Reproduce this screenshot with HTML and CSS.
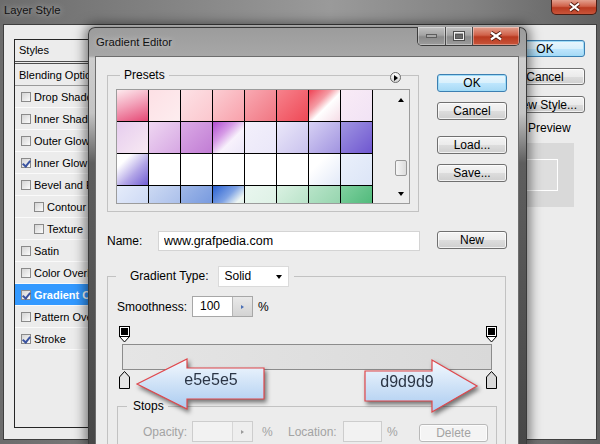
FILE: index.html
```html
<!DOCTYPE html>
<html lang="en">

<head>
    <meta charset="UTF-8">
    <meta name="viewport" content="width=device-width, initial-scale=1.0">
    <title>Layer Style - Gradient Editor</title>
    <link rel="stylesheet" href="styles.css">
</head>

<body>
    <!-- Layer Style dialog (behind) -->
    <div class="window layer-style">
        <div class="ls-titlebar">
            <span class="ls-title">Layer Style</span>
            <span class="ls-close">
                <svg width="13" height="10" viewBox="0 0 13 10">
                    <path d="M2 1.5 L11 8.5 M11 1.5 L2 8.5" stroke="#5a1e12" stroke-width="4" />
                    <path d="M2 1.5 L11 8.5 M11 1.5 L2 8.5" stroke="#fff" stroke-width="2.2" />
                </svg>
            </span>
        </div>
        <div class="ls-client">
            <div class="styles-list">
                <div class="list-head">Styles</div>
                <div class="list-row plain">Blending Options: Default</div>
                <div class="list-row"><span class="check"></span>Drop Shadow</div>
                <div class="list-row"><span class="check"></span>Inner Shadow</div>
                <div class="list-row"><span class="check"></span>Outer Glow</div>
                <div class="list-row"><span class="check on"></span>Inner Glow</div>
                <div class="list-row"><span class="check"></span>Bevel and Emboss</div>
                <div class="list-row sub"><span class="check"></span>Contour</div>
                <div class="list-row sub"><span class="check"></span>Texture</div>
                <div class="list-row"><span class="check"></span>Satin</div>
                <div class="list-row"><span class="check"></span>Color Overlay</div>
                <div class="list-row selected"><span class="check on"></span>Gradient Overlay</div>
                <div class="list-row"><span class="check"></span>Pattern Overlay</div>
                <div class="list-row"><span class="check on"></span>Stroke</div>
            </div>
            <div class="ls-side">
                <button class="btn default">OK</button>
                <button class="btn">Cancel</button>
                <button class="btn">New Style...</button>
                <div class="preview-row"><span class="check on"></span>Preview</div>
                <div class="preview-box"><div class="preview-swatch"></div></div>
            </div>
        </div>
    </div>

    <!-- Gradient Editor dialog (front) -->
    <div class="window gradient-editor">
        <div class="ge-titlebar">
            <span class="ge-title">Gradient Editor</span>
            <div class="caption-btns">
                <span class="cap-btn min">
                    <svg width="11" height="4" viewBox="0 0 11 4"><rect x="0.5" y="0.5" width="10" height="3" fill="#a9a9a9" stroke="#5d5d5d" /></svg>
                </span>
                <span class="cap-btn max">
                    <svg width="12" height="10" viewBox="0 0 12 10">
                        <rect x="0.5" y="0.5" width="11" height="9" fill="none" stroke="#4d4d4d" />
                        <rect x="1.5" y="1.5" width="9" height="7" fill="none" stroke="#efefef" />
                        <rect x="2.5" y="3.5" width="7" height="4" fill="#6a6a6a" stroke="#555" />
                    </svg>
                </span>
                <span class="cap-btn close">
                    <svg width="14" height="10" viewBox="0 0 14 10">
                        <path d="M2 1.5 L12 8.5 M12 1.5 L2 8.5" stroke="#4d1a10" stroke-width="4" />
                        <path d="M2 1.5 L12 8.5 M12 1.5 L2 8.5" stroke="#fff" stroke-width="2.2" />
                    </svg>
                </span>
            </div>
        </div>

        <div class="ge-client">
            <div class="ge-top">
                <div class="ge-left">
                    <fieldset class="group presets">
                        <legend>Presets</legend>
                        <div class="swatch-box">
                            <div class="swatches">
                                <span></span><span></span><span></span><span></span>
                                <span></span><span></span><span></span><span></span>
                                <span></span><span></span><span></span><span></span>
                                <span></span><span></span><span></span><span></span>
                                <span></span><span></span><span></span><span></span>
                                <span></span><span></span><span></span><span></span>
                                <span></span><span></span><span></span><span></span>
                                <span></span><span></span><span></span><span></span>
                            </div>
                            <div class="scrollbar">
                                <span class="sb-arrow up"></span>
                                <span class="sb-thumb"></span>
                                <span class="sb-arrow down"></span>
                            </div>
                        </div>
                    </fieldset>
                    <span class="preset-menu"></span>

                    <div class="name-row">
                        <label for="grad-name">Name:</label>
                        <input id="grad-name" class="text-input" type="text" value="www.grafpedia.com">
                    </div>
                </div>

                <div class="ge-right">
                    <button class="btn default">OK</button>
                    <button class="btn gap-s">Cancel</button>
                    <button class="btn gap-m">Load...</button>
                    <button class="btn gap-s">Save...</button>
                    <button class="btn gap-l">New</button>
                </div>
            </div>

            <fieldset class="group gradient-type">
                <legend>
                    <span>Gradient Type:</span>
                    <span class="select">Solid<span class="select-arrow"></span></span>
                </legend>

                <div class="smooth-row">
                    <span class="smooth-label">Smoothness:</span>
                    <span class="spin">
                        <span class="spin-val">100</span>
                        <span class="spin-btn"><span class="spin-tri"></span></span>
                    </span>
                    <span class="pct">%</span>
                </div>

                <div class="strip">
                    <svg class="stop-top left" width="11" height="17" viewBox="0 0 11 17">
                        <rect x="0.5" y="0.5" width="10" height="10" fill="#fff" stroke="#000" />
                        <rect x="2" y="2" width="7" height="7" fill="#000" />
                        <polygon points="0.5,10.5 10.5,10.5 5.5,16" fill="#fff" stroke="#000" />
                    </svg>
                    <svg class="stop-top right" width="11" height="17" viewBox="0 0 11 17">
                        <rect x="0.5" y="0.5" width="10" height="10" fill="#fff" stroke="#000" />
                        <rect x="2" y="2" width="7" height="7" fill="#000" />
                        <polygon points="0.5,10.5 10.5,10.5 5.5,16" fill="#fff" stroke="#000" />
                    </svg>
                    <div class="gradient-bar"></div>
                    <svg class="stop-bottom left" width="11" height="18" viewBox="0 0 11 18">
                        <polygon points="5.5,0.5 10.5,6 10.5,17.5 0.5,17.5 0.5,6" fill="#e5e5e5" stroke="#000" />
                    </svg>
                    <svg class="stop-bottom right" width="11" height="18" viewBox="0 0 11 18">
                        <polygon points="5.5,0.5 10.5,6 10.5,17.5 0.5,17.5 0.5,6" fill="#d9d9d9" stroke="#000" />
                    </svg>
                </div>

                <fieldset class="group stops">
                    <legend>Stops</legend>
                    <div class="stops-row">
                        <span class="lbl-opacity">Opacity:</span>
                        <span class="spin disabled">
                            <span class="spin-val"></span>
                            <span class="spin-btn"><span class="spin-tri"></span></span>
                        </span>
                        <span class="pct">%</span>
                        <span class="lbl-location">Location:</span>
                        <span class="loc-box"></span>
                        <span class="pct">%</span>
                        <button class="btn delete">Delete</button>
                    </div>
                </fieldset>
            </fieldset>
        </div>
    </div>

    <!-- callout arrows drawn over the dialog -->
    <svg class="callouts" width="600" height="444" viewBox="0 0 600 444">
        <defs>
            <linearGradient id="arrowFill" x1="0" y1="0" x2="0" y2="1">
                <stop offset="0" stop-color="#f4f9fe" />
                <stop offset="1" stop-color="#aacbf0" />
            </linearGradient>
        </defs>
        <polygon class="arrow" points="137,384 187,359 187,368 264,368 264,399 187,399 187,409" />
        <text class="arrow-text" x="211" y="385">e5e5e5</text>
        <polygon class="arrow" points="365,371 432,371 432,360 477,386 432,412 432,401 365,401" />
        <text class="arrow-text" x="407" y="387">d9d9d9</text>
    </svg>
</body>

</html>
```

FILE: styles.css
```css
* {
    box-sizing: border-box;
}

body {
    margin: 0;
    width: 600px;
    height: 444px;
    overflow: hidden;
    position: relative;
    background: #6b6b6b;
    font-family: 'Liberation Sans', Arial, sans-serif;
    font-size: 12px;
    color: #000;
}

.window {
    position: absolute;
}

/* ---------- Layer Style ---------- */

.layer-style {
    left: 0;
    top: 0;
    width: 600px;
    height: 444px;
    background: linear-gradient(to right, #6c6c6c 0%, #858585 30%, #9a9a9a 55%, #838383 78%, #606060 100%);
}

.ls-titlebar {
    height: 24px;
    display: flex;
    justify-content: space-between;
    align-items: flex-start;
    padding: 0 3px 0 4px;
}

.ls-title {
    font-size: 11.3px;
    line-height: 20px;
    color: #111;
    text-shadow: 0 0 6px rgba(255, 255, 255, 0.6);
}

.ls-close {
    width: 46px;
    height: 15px;
    display: flex;
    align-items: center;
    justify-content: center;
    border: 1px solid #4a1d14;
    border-top: none;
    border-radius: 0 0 5px 5px;
    background: linear-gradient(#e3a08e 0%, #d0624a 45%, #b93a20 55%, #c9553a 100%);
}

.ls-client {
    margin-left: 3px;
    width: 594px;
    height: 416px;
    border: 1px solid #3f3f3f;
    background: #ececec;
    display: flex;
    justify-content: space-between;
    padding: 14px 11px 0 10px;
}

.styles-list {
    width: 150px;
    height: 389px;
    border: 1px solid #262626;
    background: #ececec;
}

.list-head {
    height: 24px;
    line-height: 21px;
    padding-left: 4px;
    font-size: 11px;
    border-bottom: 3px double #4d4d4d;
}

.list-row {
    height: 22px;
    display: flex;
    align-items: center;
    padding-left: 6px;
    font-size: 11px;
    white-space: nowrap;
    border-bottom: 1px solid #fafafa;
}

.list-row.plain {
    padding-left: 4px;
    border-bottom-color: #9a9a9a;
}

.list-row.sub {
    padding-left: 19px;
}

.list-row.selected {
    background: #3399ff;
    color: #fff;
    font-weight: bold;
}

.check {
    position: relative;
    flex: none;
    width: 10px;
    height: 10px;
    margin-right: 3px;
    border: 1px solid #8a8a8a;
    background: linear-gradient(135deg, #d4d4d4, #fbfbfb);
}

.check.on::after {
    content: "";
    position: absolute;
    left: 2px;
    top: 0;
    width: 3px;
    height: 6px;
    border: solid #3a53a0;
    border-width: 0 2px 2px 0;
    transform: rotate(40deg);
}

.ls-side {
    width: 80px;
    display: flex;
    flex-direction: column;
    padding-top: 1px;
}

.ls-side .btn {
    height: 17px;
    line-height: 14px;
}

.ls-side .btn + .btn {
    margin-top: 11px;
}

.preview-row {
    display: flex;
    align-items: center;
    height: 14px;
    margin-top: 8px;
    padding-left: 6px;
}

.preview-row .check {
    margin-right: 7px;
}

.preview-box {
    width: 64px;
    height: 64px;
    margin: 8px 0 0 5px;
    background: #d9d9d9;
    display: flex;
    align-items: center;
    justify-content: center;
}

.preview-swatch {
    width: 32px;
    height: 32px;
    border: 1px solid #fff;
    background: #dedede;
}

/* ---------- buttons ---------- */

.btn {
    display: block;
    width: 100%;
    height: 18px;
    padding: 0;
    border: 1px solid #707070;
    border-radius: 3px;
    background: linear-gradient(#f4f4f4 0%, #ebebeb 50%, #dddddd 51%, #cfcfcf 100%);
    box-shadow: inset 0 0 0 1px rgba(255, 255, 255, 0.7);
    font-family: inherit;
    font-size: 12px;
    line-height: 15px;
    color: #000;
}

.btn.default {
    border-color: #3c7fb1;
    background: linear-gradient(#eaf6fd 0%, #d9f0fc 50%, #bee6fd 51%, #a7d9f5 100%);
    box-shadow: inset 0 0 0 1px #9fdcf8;
}

/* ---------- Gradient Editor ---------- */

.gradient-editor {
    left: 88px;
    top: 27px;
    width: 439px;
    height: 417px;
    padding: 0 7px 0 6px;
    border: 1px solid #3a3a3a;
    border-bottom: none;
    border-radius: 7px 7px 0 0;
    background: linear-gradient(#9c9c9c 0, #a7a7a7 28px, #cdcdcd 30px, #c4c4c4 85px, #5e5e5e 135px, #474747 100%);
    box-shadow: 0 0 12px 3px rgba(0, 0, 0, 0.5);
}

.ge-titlebar {
    height: 28px;
    display: flex;
    justify-content: space-between;
    align-items: flex-start;
    padding-left: 1px;
}

.ge-title {
    font-size: 11.3px;
    line-height: 28px;
    color: #111;
    text-shadow: 0 0 6px rgba(255, 255, 255, 0.6);
}

.caption-btns {
    display: flex;
    height: 19px;
    margin: -1px -1px 0 0;
    border: 1px solid #3c3c3c;
    border-top: none;
    border-radius: 0 0 5px 5px;
    overflow: hidden;
}

.cap-btn {
    display: flex;
    align-items: center;
    justify-content: center;
    height: 100%;
    background: linear-gradient(#c2c2c2 0%, #a4a4a4 45%, #8a8a8a 55%, #9c9c9c 100%);
    box-shadow: inset 0 0 0 1px rgba(255, 255, 255, 0.35);
}

.cap-btn.min {
    width: 28px;
    border-right: 1px solid #4a4a4a;
}

.cap-btn.max {
    width: 27px;
    border-right: 1px solid #4a4a4a;
}

.cap-btn.close {
    width: 46px;
    background: linear-gradient(#e3a08e 0%, #d0624a 45%, #b93a20 55%, #c9553a 100%);
}

.ge-client {
    width: 424px;
    height: 389px;
    overflow: hidden;
    border: 1px solid #6d6d6d;
    border-bottom: none;
    background: #ececec;
}

.ge-top {
    display: flex;
    padding-left: 11px;
}

.ge-left {
    position: relative;
    width: 313px;
    padding-top: 11px;
}

.ge-right {
    width: 70px;
    margin-left: 17px;
    padding-top: 17px;
    display: flex;
    flex-direction: column;
}

.gap-s {
    margin-top: 10px;
}

.gap-m {
    margin-top: 16px;
}

.gap-l {
    margin-top: 49px;
}

/* group boxes */

.group {
    margin: 0;
    padding: 0;
    min-width: 0;
    border: 1px solid #c2c2c2;
}

.group > legend {
    padding: 0 4px;
    line-height: 14px;
}

.group.presets {
    width: 312px;
    height: 144px;
    padding-left: 8px;
}

.presets > legend {
    margin-left: 4px;
}

.swatch-box {
    display: flex;
    width: 294px;
    height: 115px;
    margin-top: 7px;
    border: 1px solid #9c9c9c;
    background: #ededed;
}

.swatches {
    display: grid;
    grid-template-columns: repeat(8, 31px);
    grid-auto-rows: 31px;
    gap: 1px;
    width: 256px;
    height: 113px;
    overflow: hidden;
    border-right: 1px solid #000;
    background: #000;
}

.swatches span:nth-child(1) { background: linear-gradient(160deg, #fdeaee 0%, #f3a4bb 45%, #e54874 100%); }
.swatches span:nth-child(2) { background: linear-gradient(135deg, #fde0e5, #fdedef); }
.swatches span:nth-child(3) { background: linear-gradient(135deg, #fde1e5, #fbc7ce); }
.swatches span:nth-child(4) { background: linear-gradient(135deg, #fccdd3, #f8a1ab); }
.swatches span:nth-child(5) { background: linear-gradient(135deg, #f9a9b2, #f07682); }
.swatches span:nth-child(6) { background: linear-gradient(135deg, #f7828c, #ee4956); }
.swatches span:nth-child(7) { background: linear-gradient(135deg, #ef4254 0%, #f59aa3 35%, #fff 55%, #f5dce6 100%); }
.swatches span:nth-child(8) { background: linear-gradient(135deg, #f9ebf6, #f1e3f5); }

.swatches span:nth-child(9) { background: linear-gradient(135deg, #e6cdee, #f8e9f3); }
.swatches span:nth-child(10) { background: linear-gradient(135deg, #efd7f2, #d6a7e3); }
.swatches span:nth-child(11) { background: linear-gradient(135deg, #dbaae6, #c17dd4); }
.swatches span:nth-child(12) { background: linear-gradient(135deg, #b04dcf 0%, #d69be6 35%, #f8f2fc 60%, #ebe6f8 100%); }
.swatches span:nth-child(13) { background: linear-gradient(135deg, #f3f0fb, #eae7f9); }
.swatches span:nth-child(14) { background: linear-gradient(135deg, #ebe8f9, #c9c2ee); }
.swatches span:nth-child(15) { background: linear-gradient(135deg, #d7d1f4, #a194e0); }
.swatches span:nth-child(16) { background: linear-gradient(135deg, #a095e2, #6f57d0); }

.swatches span:nth-child(17) { background: linear-gradient(135deg, #fff 0%, #fff 22%, #b2a5e7 60%, #705ed3 100%); }
.swatches span:nth-child(18),
.swatches span:nth-child(19),
.swatches span:nth-child(20),
.swatches span:nth-child(21),
.swatches span:nth-child(22) { background: #fff; }
.swatches span:nth-child(23) { background: linear-gradient(135deg, #fff 30%, #e2e9f8 100%); }
.swatches span:nth-child(24) { background: linear-gradient(135deg, #eaf0fb, #dce5f7); }

.swatches span:nth-child(25) { background: linear-gradient(135deg, #e5ecfa, #c6d4f3); }
.swatches span:nth-child(26) { background: linear-gradient(135deg, #ccd9f3, #a2b9e8); }
.swatches span:nth-child(27) { background: linear-gradient(135deg, #a0b8e8, #6d92dc); }
.swatches span:nth-child(28) { background: linear-gradient(135deg, #2a61d2 0%, #7ea2e4 40%, #eef6f3 65%, #cce9d7 100%); }
.swatches span:nth-child(29) { background: linear-gradient(135deg, #e9f6ef, #dbf0e3); }
.swatches span:nth-child(30) { background: linear-gradient(135deg, #daf1e2, #b0dfc2); }
.swatches span:nth-child(31) { background: linear-gradient(135deg, #b8e4c9, #8dd1a7); }
.swatches span:nth-child(32) { background: linear-gradient(135deg, #80d0a0, #44b471); }

.scrollbar {
    width: 16px;
    margin-left: auto;
    display: flex;
    flex-direction: column;
    align-items: center;
}

.sb-arrow {
    width: 0;
    height: 0;
    border-left: 3.5px solid transparent;
    border-right: 3.5px solid transparent;
}

.sb-arrow.up {
    margin-top: 8px;
    border-bottom: 4px solid #000;
}

.sb-arrow.down {
    margin-top: auto;
    margin-bottom: 7px;
    border-top: 4px solid #000;
}

.sb-thumb {
    width: 12px;
    height: 16px;
    margin-top: 58px;
    border: 1px solid #979797;
    border-radius: 2px;
    background: linear-gradient(to right, #f6f6f6, #dcdcdc);
}

.preset-menu {
    position: absolute;
    left: 283px;
    top: 15px;
    width: 11px;
    height: 11px;
    border: 1px solid #6a6a6a;
    border-radius: 50%;
    background: linear-gradient(#ffffff, #d4d4d4);
}

.preset-menu::after {
    content: "";
    position: absolute;
    left: 3px;
    top: 1.5px;
    border-left: 4px solid #000;
    border-top: 3px solid transparent;
    border-bottom: 3px solid transparent;
}

.name-row {
    display: flex;
    align-items: center;
    height: 20px;
    margin-top: 19px;
}

.name-row label {
    width: 51px;
}

.text-input {
    width: 262px;
    height: 20px;
    padding: 0 0 0 5px;
    border: 1px solid #d4d4d4;
    background: #fff;
    font-family: inherit;
    font-size: 12.5px;
    color: #000;
}

.group.gradient-type {
    width: 399px;
    height: 200px;
    margin: 15px 0 0 11px;
}

.gradient-type > legend {
    display: flex;
    align-items: center;
    gap: 9px;
    margin-left: 8px;
    padding: 0 5px 0 14px;
    line-height: 21px;
}

.select {
    display: flex;
    align-items: center;
    width: 71px;
    height: 21px;
    padding-left: 6px;
    border: 1px solid #dadada;
    background: #fff;
}

.select-arrow {
    margin: 0 6px 0 auto;
    border-top: 4px solid #000;
    border-left: 3.5px solid transparent;
    border-right: 3.5px solid transparent;
}

.smooth-row {
    display: flex;
    align-items: center;
    height: 21px;
    margin: 9px 0 0 9px;
}

.smooth-label {
    width: 75px;
    white-space: nowrap;
}

.spin {
    display: flex;
    width: 61px;
    height: 21px;
    border: 1px solid #a7a7a7;
    background: #fff;
}

.spin-val {
    flex: 1;
    padding-left: 7px;
    line-height: 19px;
}

.spin-btn {
    width: 20px;
    display: flex;
    align-items: center;
    justify-content: center;
    border-left: 1px solid #b5b5b5;
    background: linear-gradient(#e9e9e9, #d3d3d3);
}

.spin-tri {
    border-left: 3px solid #4a6fb5;
    border-top: 2.5px solid transparent;
    border-bottom: 2.5px solid transparent;
}

.pct {
    margin-left: 5px;
}

.strip {
    position: relative;
    width: 380px;
    height: 63px;
    margin: 9px 0 0 9px;
    padding-top: 18px;
}

.gradient-bar {
    width: 370px;
    height: 26px;
    margin-left: 5px;
    border: 1px solid #8c8c8c;
    background: linear-gradient(to right, #e5e5e5, #d9d9d9);
}

.stop-top,
.stop-bottom {
    position: absolute;
}

.stop-top {
    top: 0;
}

.stop-bottom {
    top: 45px;
}

.strip .left {
    left: 2px;
}

.strip .right {
    left: 369px;
}

.group.stops {
    width: 380px;
    height: 60px;
    margin: 10px 0 0 9px;
}

.stops > legend {
    margin-left: 9px;
    padding: 0 4px 0 6px;
}

.stops-row {
    display: flex;
    align-items: center;
    height: 21px;
    margin-top: 8px;
    padding-left: 25px;
    color: #a3a3a3;
}

.lbl-opacity {
    width: 49px;
}

.spin.disabled {
    border-color: #cdcdcd;
    background: #f2f2f2;
}

.spin.disabled .spin-btn {
    border-left-color: #d6d6d6;
    background: #eeeeee;
}

.spin.disabled .spin-tri {
    border-left-color: #9a9a9a;
}

.stops-row .pct {
    width: 10px;
    margin-left: 9px;
}

.lbl-location {
    width: 55px;
    margin-left: 16px;
}

.loc-box {
    width: 39px;
    height: 21px;
    border: 1px solid #cdcdcd;
    background: #f2f2f2;
}

.stops-row .loc-box + .pct {
    margin-left: 5px;
}

.btn.delete {
    width: 69px;
    margin: 3px 0 0 22px;
    border-color: #b9b9b9;
    background: #f4f4f4;
    color: #a3a3a3;
}

/* ---------- callouts ---------- */

.callouts {
    position: absolute;
    left: 0;
    top: 0;
    pointer-events: none;
    filter: drop-shadow(2px 3px 2px rgba(0, 0, 0, 0.5));
}

.arrow {
    fill: url(#arrowFill);
    stroke: #e0464b;
    stroke-width: 1.2;
}

.arrow-text {
    font-family: 'Liberation Sans', Arial, sans-serif;
    font-size: 16px;
    fill: #2b3545;
    text-anchor: middle;
}
```
